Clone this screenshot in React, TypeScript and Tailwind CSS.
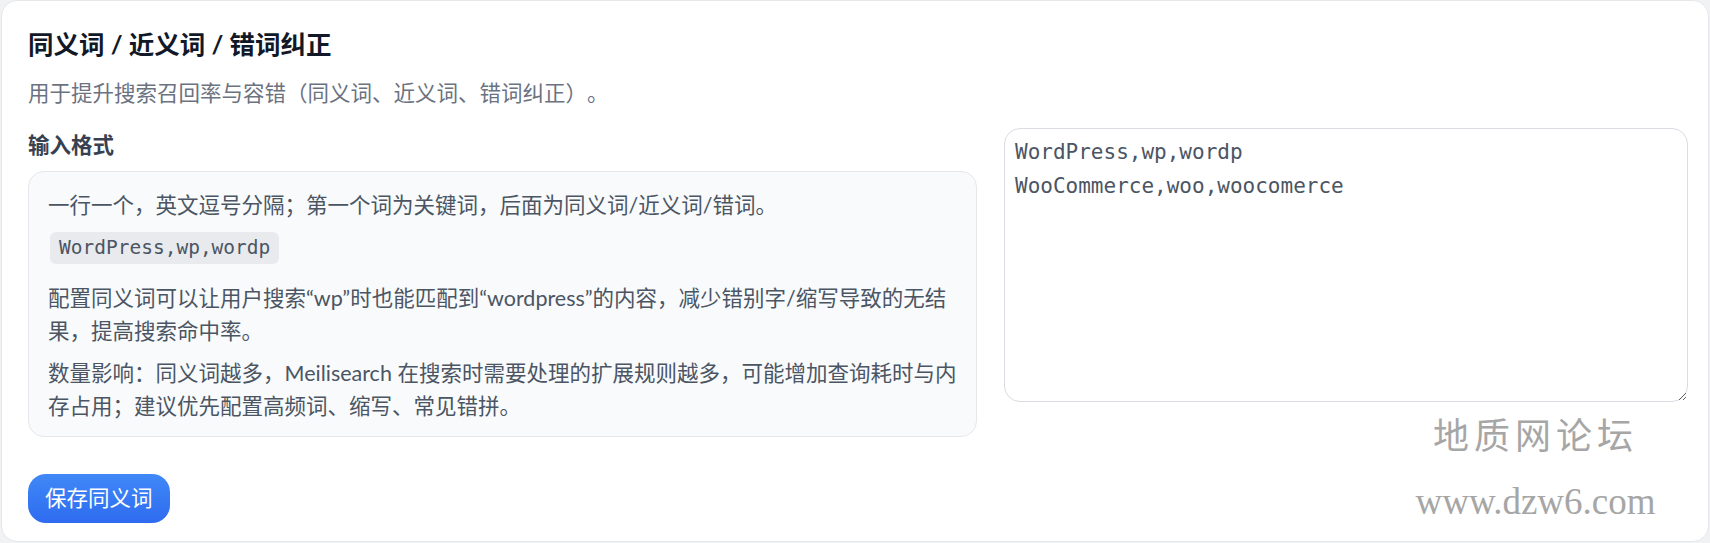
import React, { useState } from 'react'

const sans = { fontFamily: 'Lato, "Noto Sans CJK SC", sans-serif' }
const mono = { fontFamily: '"DejaVu Sans Mono", monospace' }

export default function App() {
  const [value, setValue] = useState('WordPress,wp,wordp\nWooCommerce,woo,woocomerce')

  return (
    <div className="relative h-[543px] w-full overflow-hidden bg-[#f1f2f4] [text-spacing-trim:space-all]">
      <div
        className="mx-[1px] rounded-2xl border border-[#e5e7eb] bg-white pt-[25px] pb-[18px] pl-[26px] pr-[20px]"
        style={sans}
      >
        {/* Header */}
        <h2 className="text-[25.5px] font-bold leading-[36px] text-[#111827]">同义词 / 近义词 / 错词纠正</h2>
        <p className="mt-[16px] text-[21.5px] leading-[30px] text-[#6b7280]">
          用于提升搜索召回率与容错（同义词、近义词、错词纠正）。
        </p>

        <div className="mt-[20px] grid grid-cols-[949px_684px] gap-[27px]">
          {/* Format help */}
          <div>
            <h3 className="text-[21.5px] font-bold leading-[34px] text-[#374151]">输入格式</h3>
            <div className="mt-[9px] rounded-2xl border border-[#e5e7eb] bg-[#f8fafc] pl-[19px] pr-[14px] pt-[17px] pb-[13px] text-[21.5px] leading-[33px] text-[#4b5563]">
              <p>一行一个，英文逗号分隔；第一个词为关键词，后面为同义词/近义词/错词。</p>
              <div className="mt-[8px]">
                <code
                  className="ml-[2px] inline-block h-[32px] rounded-md bg-[#e8eaee] px-[9px] text-[19.5px] leading-[32px] text-[#4b5563]"
                  style={mono}
                >
                  WordPress,wp,wordp
                </code>
              </div>
              <p className="mt-[18px]">
                配置同义词可以让用户搜索“wp”时也能匹配到“wordpress”的内容，减少错别字/缩写导致的无结果，提高搜索命中率。
              </p>
              <p className="mt-[9px]">
                数量影响：同义词越多，Meilisearch 在搜索时需要处理的扩展规则越多，可能增加查询耗时与内存占用；建议优先配置高频词、缩写、常见错拼。
              </p>
            </div>
          </div>

          {/* Editor */}
          <textarea
            value={value}
            onChange={(e) => setValue(e.target.value)}
            className="h-[274px] w-full rounded-2xl border border-[#d9dce1] bg-white px-[10px] pt-[6px] text-[21px] leading-[34px] text-[#4b5563] outline-none"
            style={mono}
          />
        </div>

        <button className="mt-[37px] h-[49px] rounded-[18px] bg-gradient-to-b from-[#4088f7] to-[#2f6bf0] px-[17px] text-[21.5px] text-white">
          保存同义词
        </button>
      </div>

      {/* Watermark */}
      <div className="pointer-events-none absolute left-[1413px] top-[409px] flex w-[245px] flex-col items-center text-[#a6a6a6]">
        <span className="text-[36px] leading-[48px] tracking-[5px]" style={{ fontFamily: '"Noto Sans CJK SC", serif' }}>
          地质网论坛
        </span>
        <span className="mt-[23px] text-[37px] leading-[44px]" style={{ fontFamily: '"Liberation Serif", serif' }}>
          www.dzw6.com
        </span>
      </div>
    </div>
  )
}
